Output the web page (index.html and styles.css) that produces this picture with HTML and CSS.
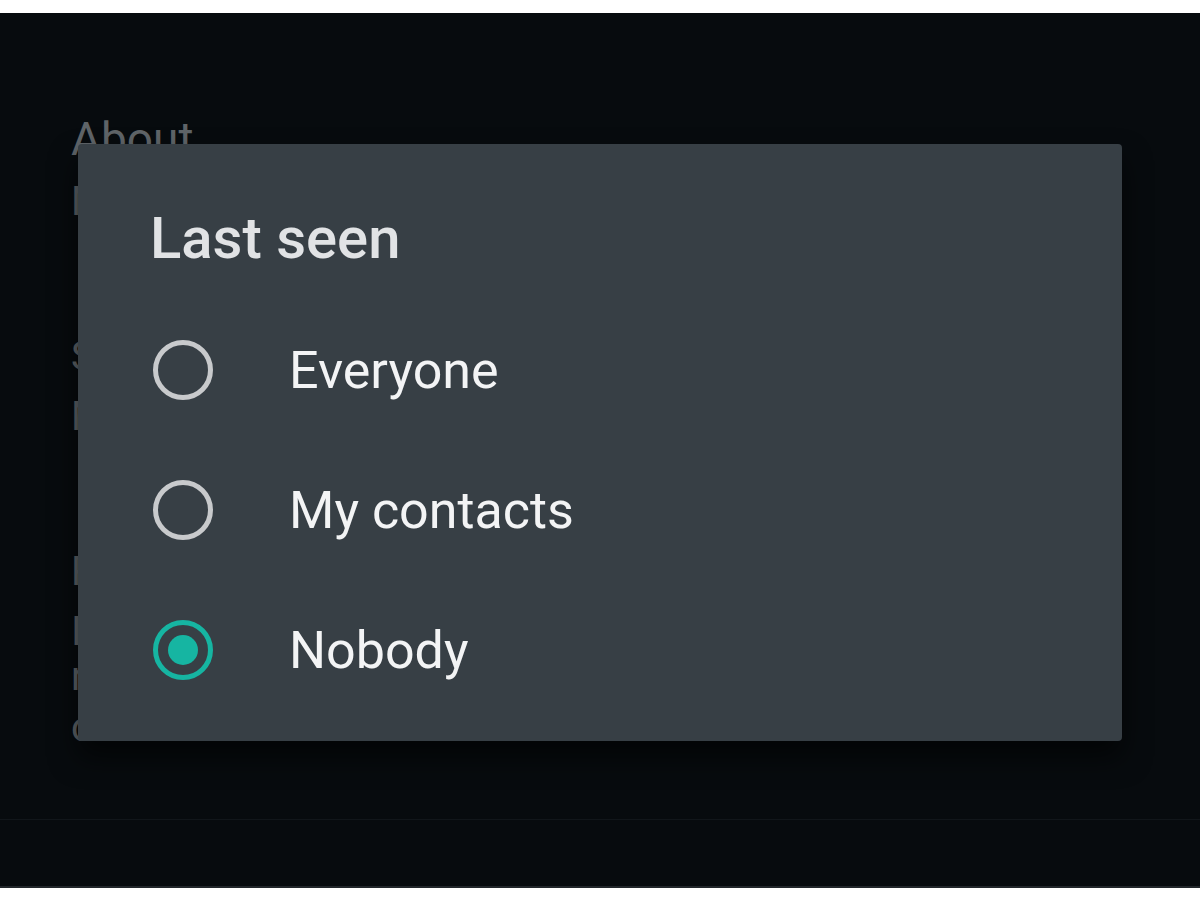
FILE: index.html
```html
<!DOCTYPE html>
<html lang="en">
<head>
    <meta charset="UTF-8">
    <meta name="viewport" content="width=device-width, initial-scale=1.0">
    <title>Privacy - Last seen</title>
    <link rel="stylesheet" href="styles.css">
</head>
<body>
    <div class="screen">
        <div class="settings">
            <div class="item">
                <p class="item-title">About</p>
                <p class="item-sub">Nobody</p>
            </div>
            <div class="item">
                <p class="item-title">Status</p>
                <p class="item-sub">My contacts</p>
            </div>
            <div class="item">
                <p class="item-title">Read receipts</p>
                <p class="item-text">If turned off</p>
                <p class="item-text">receipts</p>
                <p class="item-text">chats.</p>
            </div>
        </div>

        <div class="bottom-bar"></div>

        <div class="dialog">
            <h2 class="dialog-title">Last seen</h2>
            <div class="option">
                <span class="radio"></span>
                <span class="label">Everyone</span>
            </div>
            <div class="option">
                <span class="radio"></span>
                <span class="label">My contacts</span>
            </div>
            <div class="option">
                <span class="radio checked"></span>
                <span class="label">Nobody</span>
            </div>
        </div>
    </div>
</body>
</html>
```

FILE: styles.css
```css
body {
    margin: 0;
    padding: 0;
    background-color: #ffffff;
    font-family: Roboto, "Liberation Sans", sans-serif;
}
.screen {
    position: relative;
    margin-top: 13px;
    height: 873px;
    background-color: #070b0e;
    border-bottom: 2px solid #22272b;
    overflow: hidden;
}
.settings {
    padding: 99px 0 0 71px;
    color: #5f6468;
}
.settings p {
    margin: 0;
    font-size: 40px;
    line-height: 48px;
    white-space: nowrap;
}
.item {
    margin-bottom: 107px;
}
.item:first-child .item-title {
    font-size: 46px;
    line-height: 54px;
}
.item:first-child .item-sub {
    margin-top: 11px;
}
.item-sub,
.item-title + .item-text {
    margin-top: 12px !important;
}
.item-text:nth-child(3) {
    margin-top: -3px !important;
}
.item-text:nth-child(4) {
    margin-top: 3px !important;
}
.bottom-bar {
    position: absolute;
    left: 0;
    right: 0;
    bottom: 0;
    height: 66px;
    border-top: 1px solid #11161a;
    background-color: #070b0e;
}
.dialog {
    position: absolute;
    left: 78px;
    top: 131px;
    width: 1044px;
    height: 597px;
    box-sizing: border-box;
    padding: 60px 0 0 0;
    background-color: #373f45;
    border-radius: 4px;
    box-shadow: 0 16px 28px rgba(0, 0, 0, 0.6);
}
.dialog-title {
    margin: 0 0 28px 72px;
    font-size: 58px;
    font-weight: 500;
    line-height: 68px;
    color: #e1e3e5;
}
.option {
    display: flex;
    align-items: center;
    height: 140px;
    padding-left: 75px;
    gap: 76px;
}
.radio {
    width: 60px;
    height: 60px;
    box-sizing: border-box;
    border: 5px solid #c8cacc;
    border-radius: 50%;
    display: flex;
    align-items: center;
    justify-content: center;
    flex-shrink: 0;
}
.radio.checked {
    border-color: #16b5a2;
}
.radio.checked::after {
    content: "";
    width: 30px;
    height: 30px;
    border-radius: 50%;
    background-color: #16b5a2;
}
.label {
    font-size: 52px;
    color: #f3f4f5;
}
```
